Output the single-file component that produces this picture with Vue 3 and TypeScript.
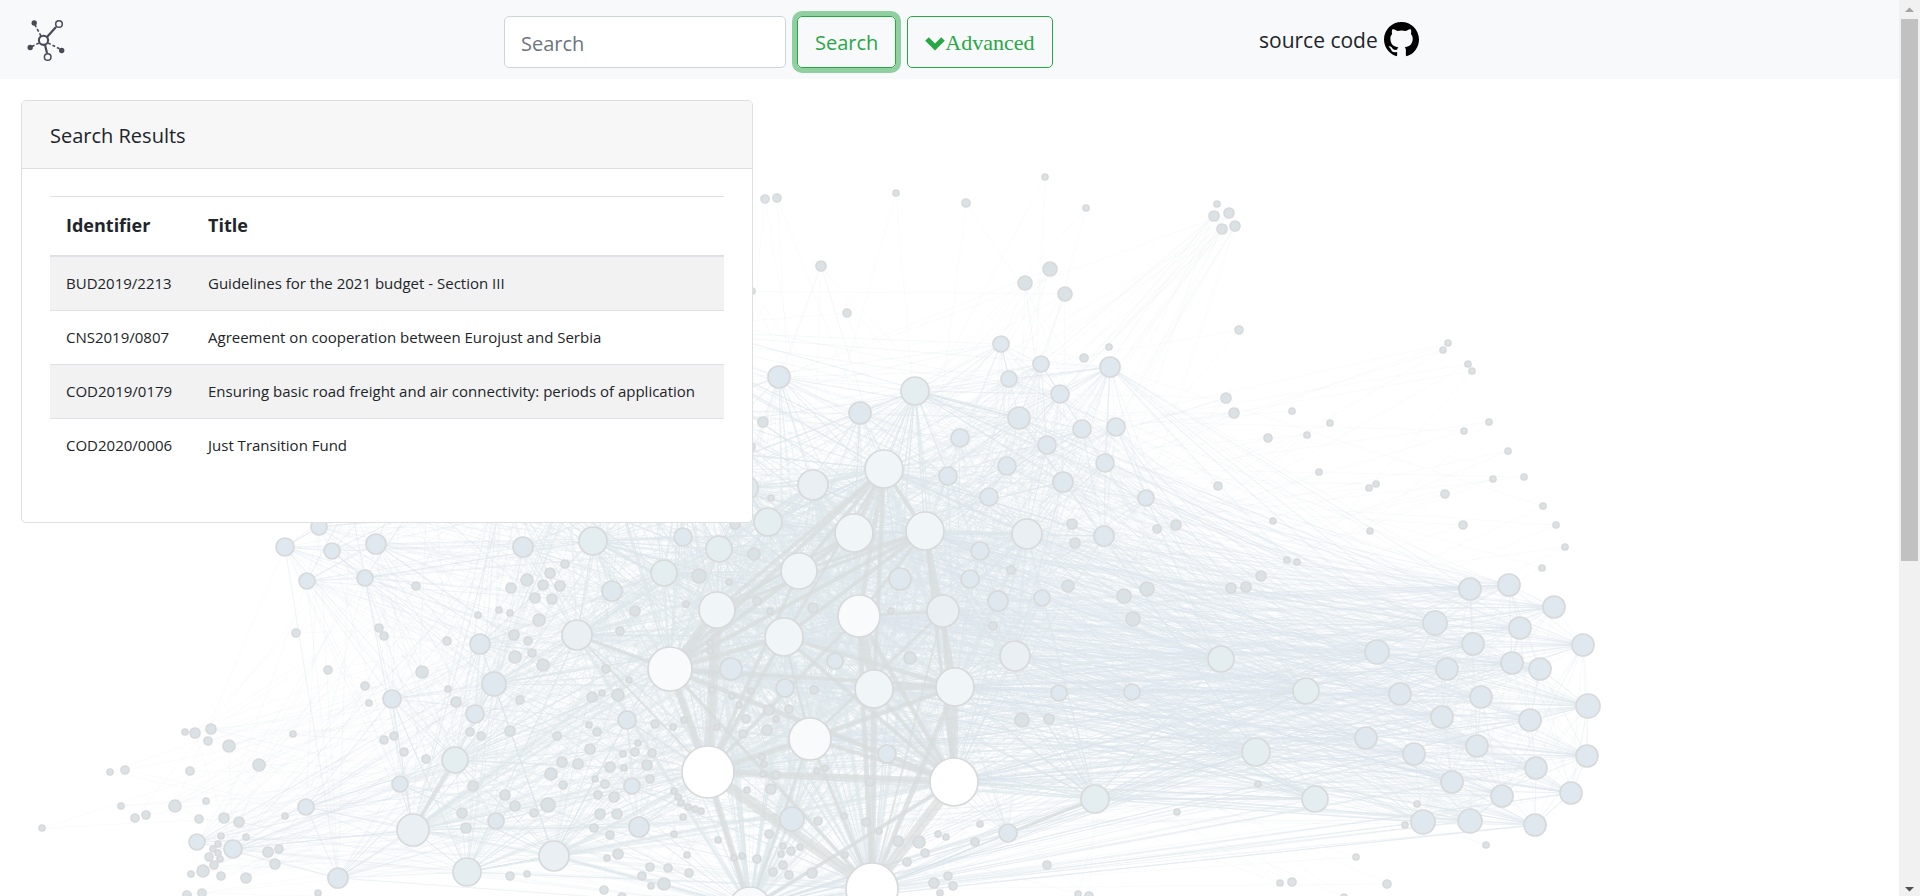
<script setup lang="ts">
import { ref } from 'vue'

type Node = [x: number, y: number, r: number]
interface Edge { x1: number; y1: number; x2: number; y2: number; w: number; o: number }

const query = ref('')

const results = [
  { id: 'BUD2019/2213', title: 'Guidelines for the 2021 budget - Section III' },
  { id: 'CNS2019/0807', title: 'Agreement on cooperation between Eurojust and Serbia' },
  { id: 'COD2019/0179', title: 'Ensuring basic road freight and air connectivity: periods of application' },
  { id: 'COD2020/0006', title: 'Just Transition Fund' },
]

// Dossiers in the upper part of the graph
const north: Node[] = [
  [765,199,4],[777,198,4],[896,193,3],[966,203,4],[1045,177,3],[1086,208,3],[1217,204,3],[1214,216,5],[1229,213,5],
  [1235,226,5],[1222,229,5],[821,266,5],[1050,269,7],[1025,283,7],[1065,294,7],[847,313,4],[1001,344,8],[1239,330,4],
  [1109,347,3],[1084,358,4],[1041,364,8],[1110,367,10],[1009,379,8],[1060,394,9],[779,377,11],[915,391,14],[860,413,11],
  [763,422,5],[1019,418,11],[960,438,9],[1082,429,9],[1116,427,9],[1047,445,9],[1226,398,5],[1234,413,5],[1292,411,3],
  [1268,438,4],[884,469,19],[813,485,15],[948,476,9],[1007,466,9],[1105,463,9],[1063,482,10],[989,497,9],[1146,498,8],
  [1218,486,4],[1273,521,3],[1072,524,5],[1157,529,4],[1176,525,5],[771,498,3],[752,291,3],[746,488,12],[750,447,5],[768,522,14],
  [1448,343,3],[1443,350,3],[1468,364,3],[1472,371,3],[1330,423,3],[1307,435,3],[1319,472,3],[1376,484,3],[1369,488,3],
  [1464,431,3],[1489,422,3],[1508,451,3],[1493,479,3],[1524,477,3],[1445,494,4],[1543,506,3],[1556,525,3],[1463,525,4],
  [1370,531,3],[1565,547,3],[1542,568,3],[1287,560,3],[1297,562,3],[1261,576,5],[1246,587,5],[1231,588,5],
  [560,290,12],[640,330,12],[430,420,10],[500,470,12],[600,440,12],[690,410,12],[400,480,9],[680,480,13],[560,500,10],[350,500,8],
]

// Densely linked group on the right
const east: Node[] = [
  [1470,589,11],[1509,585,11],[1554,607,11],[1583,645,11],[1520,628,11],[1435,623,12],[1473,644,11],[1377,652,12],[1512,663,11],
  [1540,669,11],[1447,669,11],[1400,694,11],[1481,697,11],[1588,706,12],[1442,717,11],[1530,720,11],[1366,738,11],[1414,754,11],
  [1477,746,11],[1587,756,11],[1536,768,11],[1452,782,11],[1502,796,11],[1571,793,11],[1535,825,11],[1470,821,12],[1423,822,12],
]

const centre: Node[] = [
  [1417,804,3],[1405,825,3],[1486,845,3],[1356,857,3],[1280,883,3],[1292,882,4],[1387,884,4],[1258,784,3],[1221,659,13],
  [1306,691,13],[1256,752,14],[1315,799,13],[1344,897,3],
  [854,533,19],[925,531,19],[1027,534,15],[980,551,9],[900,579,11],[970,579,9],[998,601,10],[1011,570,4],[1075,543,5],
  [1104,536,10],[1068,586,6],[1042,598,8],[1124,596,7],[1147,589,7],[1133,619,7],[859,616,21],[943,611,16],[891,611,3],
  [993,626,4],[1015,656,15],[835,661,8],[910,658,6],[874,689,19],[955,687,19],[1059,693,8],[1132,692,8],[1022,720,7],
  [1049,719,5],[887,754,9],[954,782,24],[1095,799,14],[1008,833,9],[1177,812,3],[1047,865,4],[980,824,3],[975,842,4],
  [938,834,3],[946,837,3],[919,842,6],[898,841,5],[925,853,4],[907,862,4],[866,822,4],[879,831,3],[870,782,4],[825,768,3],
  [844,816,3],[845,855,3],[934,883,5],[948,876,4],[953,886,4],[940,893,3],[872,889,26],[1078,894,3],[1089,896,4],
  [523,547,10],[593,541,14],[683,537,9],[719,549,13],[664,573,13],[699,576,7],[754,554,6],[735,524,5],[799,571,18],[729,582,3],
  [565,564,4],[550,573,5],[527,580,6],[511,588,5],[543,585,5],[560,586,5],[535,598,5],[552,599,5],[612,591,10],[635,611,5],
  [686,604,3],[499,610,3],[510,613,3],[478,615,3],[539,620,6],[620,631,4],[577,635,15],[717,610,18],[757,601,4],[770,611,3],
  [813,608,5],[784,637,19],[514,635,5],[528,641,4],[532,653,4],[515,657,6],[543,665,6],[480,644,10],[494,684,12],[606,669,4],
  [629,680,3],[670,669,22],[710,643,3],[710,651,3],[731,669,11],[785,688,9],[712,690,3],[732,696,3],[739,705,3],[751,691,3],
  [814,690,4],[769,710,5],[789,709,4],[776,719,3],[746,719,4],[743,734,4],[767,730,5],[592,697,5],[602,693,3],[618,695,6],
  [520,700,4],[475,714,9],[470,732,4],[481,736,4],[510,731,5],[627,720,9],[655,724,4],[673,727,3],[684,720,3],[717,727,3],
  [589,725,3],[597,732,4],[557,736,4],[590,749,5],[638,743,3],[635,752,4],[623,754,3],[652,753,4],[562,762,5],[578,764,5],
  [551,774,6],[563,785,4],[610,767,5],[624,768,3],[647,765,5],[650,779,4],[595,779,3],[605,784,4],[632,786,8],[598,795,4],
  [614,797,5],[674,791,3],[678,797,3],[681,803,3],[688,807,3],[695,809,3],[701,811,3],[683,817,3],[674,834,3],[708,772,26],
  [810,739,21],[776,775,4],[763,774,3],[764,764,3],[762,757,3],[771,789,5],[747,790,3],[817,771,3],[473,786,5],[505,795,5],
  [515,806,5],[534,813,4],[548,805,7],[496,821,8],[600,814,5],[617,814,5],[594,828,4],[610,835,4],[639,827,10],[554,856,15],
  [607,858,3],[618,854,5],[687,855,3],[718,840,3],[734,858,3],[742,856,3],[757,859,4],[650,867,4],[668,868,4],[642,876,4],
  [689,873,4],[664,884,6],[651,886,3],[604,890,4],[510,876,4],[527,874,3],[792,819,12],[769,834,4],[818,821,4],[800,847,3],
  [791,851,4],[783,846,3],[781,854,3],[783,865,4],[773,872,4],[789,875,4],[812,873,5],[750,908,21],[622,897,4],
]

const west: Node[] = [
  [319,527,8],[285,547,9],[332,551,8],[376,544,10],[307,581,8],[365,578,8],[416,586,4],[296,633,4],[379,628,4],[384,636,4],
  [447,641,4],[328,670,4],[422,672,6],[365,686,4],[369,703,3],[392,699,9],[448,689,3],[456,702,5],[185,732,3],[195,733,5],
  [211,729,5],[208,741,4],[229,746,6],[293,734,3],[384,740,4],[394,736,4],[404,752,4],[426,759,4],[259,765,6],[110,772,3],
  [125,770,4],[190,771,4],[455,760,13],[400,784,8],[175,806,6],[206,801,3],[121,806,3],[135,818,4],[146,815,4],[42,828,3],
  [199,819,4],[224,818,5],[239,822,5],[306,807,8],[285,816,3],[413,830,16],[462,813,5],[466,828,5],[197,842,8],[221,836,3],
  [246,837,3],[218,844,3],[213,849,3],[218,853,3],[209,857,4],[220,859,3],[214,865,4],[233,849,9],[268,852,5],[279,849,4],
  [275,864,5],[203,871,6],[191,874,3],[221,876,4],[246,878,5],[338,878,10],[467,872,14],[187,895,4],[202,893,4],[318,893,3],
]

const nodes: Node[] = [...north, ...east, ...centre, ...west]

let seed = 20200
function random(): number {
  seed = (seed * 1664525 + 1013904223) % 4294967296
  return seed / 4294967296
}

function pickTarget(from: Node, pool: Node[], reach: number): Node {
  let best = pool[0]
  let bestScore = -1
  for (let i = 0; i < 5; i++) {
    const node = pool[Math.floor(random() * pool.length)]
    if (node === from) continue
    const distance = Math.hypot(node[0] - from[0], node[1] - from[1])
    const score = node[2] / (reach + distance) * (0.5 + random())
    if (score > bestScore) {
      best = node
      bestScore = score
    }
  }
  return best
}

function degree(r: number): number {
  if (r >= 18) return 110
  if (r >= 12) return 60
  if (r >= 8) return 26
  if (r >= 5) return 7
  return 2
}

const major = nodes.filter(n => n[2] >= 8)
const core = nodes.filter(n => n[2] >= 8 && n[0] > 540 && n[0] < 1160)
const links: Edge[] = []

function connect(a: Node, b: Node, w = 1) {
  const o = a[2] < 8 ? 0.16 : a[2] < 12 ? 0.24 : 0.32
  links.push({ x1: a[0], y1: a[1], x2: b[0], y2: b[1], w, o })
}

for (const node of [...north, ...centre, ...west]) {
  const pool = node[2] < 5 || node[0] > 1180 ? core : major.filter(n => n[0] < 1340)
  for (let i = 0; i < degree(node[2]); i++) {
    const target = pickTarget(node, pool, 120)
    connect(node, target, node[2] > 14 && target[2] > 14 && random() < 0.2 ? 4 : 1)
  }
}
for (const node of east) {
  for (let i = 0; i < 36; i++) connect(node, pickTarget(node, core, 500))
  for (let i = 0; i < 9; i++) connect(node, pickTarget(node, east, 200))
}

const strong: [number, number, number, number, number][] = [
  [708,772,717,610,10],[708,772,670,669,7],[708,772,872,889,11],[708,772,750,908,6],[708,772,810,739,6],[708,772,784,637,4],
  [708,772,799,571,4],[708,772,859,616,3],[708,772,954,782,7],[708,772,577,635,2],[670,669,577,635,3],[670,669,717,610,8],
  [670,669,784,637,5],[670,669,854,533,4],[670,669,925,531,4],[670,669,884,469,4],[670,669,954,782,5],[670,669,872,889,3],
  [670,669,955,687,4],[717,610,884,469,4],[717,610,925,531,3],[717,610,854,533,3],[872,889,954,782,11],[872,889,810,739,4],
  [872,889,859,616,5],[872,889,874,689,6],[872,889,955,687,5],[872,889,943,611,2],[954,782,955,687,7],[954,782,925,531,3],
  [954,782,874,689,4],[954,782,859,616,5],[954,782,784,637,4],[954,782,943,611,4],[750,908,954,782,3],[750,908,810,739,2],
  [884,469,854,533,6],[884,469,925,531,4],[884,469,859,616,5],[884,469,874,689,4],[884,469,784,637,3],[884,469,799,571,4],
  [925,531,955,687,6],[925,531,784,637,4],[925,531,859,616,3],[859,616,943,611,3],[859,616,874,689,8],[799,571,925,531,3],
  [784,637,955,687,4],[784,637,810,739,2],[810,739,955,687,4],[810,739,943,611,3],[874,689,955,687,4],[810,739,954,782,4],
  [413,830,455,760,4],[1095,799,1008,833,3],
]

function fill(r: number): string {
  if (r >= 24) return '#ffffff'
  if (r >= 21) return '#f8fafc'
  if (r >= 18) return '#f0f5f8'
  if (r >= 15) return '#e9eff3'
  if (r >= 13) return '#e4edf0'
  if (r >= 8) return '#dfe8ee'
  return '#dbe2e6'
}
</script>

<template>
  <div class="window">
    <div class="page">
      <nav class="navbar">
        <a class="brand" href="#" aria-label="Home">
          <svg width="44" height="46" viewBox="24 17 44 46" fill="none" stroke="#4a4a57">
            <path d="M47 37 56 27M45 45l2 8" stroke-width="2.2" />
            <path d="M41 36l-6-11M39 43l-8 4M48 43l12 6" stroke-width="1.6" stroke-dasharray="3 2" />
            <circle cx="43.5" cy="40.3" r="4.6" stroke-width="2.1" />
            <circle cx="59" cy="24" r="3.3" stroke-width="1.5" />
            <circle cx="47.7" cy="57" r="3.3" stroke-width="1.5" />
            <g fill="#4a4a57" stroke="none">
              <circle cx="34.2" cy="23" r="2.7" /><circle cx="30.2" cy="47.5" r="2.7" /><circle cx="61.7" cy="50.5" r="2.7" />
            </g>
          </svg>
        </a>
        <form class="search" role="search" @submit.prevent>
          <input v-model="query" class="field" type="search" placeholder="Search" aria-label="Search">
          <button class="button active" type="submit">Search</button>
          <button class="button advanced" type="button">
            <svg width="20" height="15" viewBox="0 0 20 15"><path d="M2 3 10 11 18 3" fill="none" stroke="#28a745" stroke-width="5" /></svg>Advanced
          </button>
        </form>
        <a class="source" href="#">source code
          <svg width="35" height="35" viewBox="0 0 16 16" aria-hidden="true"><path fill="#000" fill-rule="evenodd" d="M8 0C3.58 0 0 3.58 0 8c0 3.54 2.29 6.53 5.47 7.59.4.07.55-.17.55-.38 0-.19-.01-.82-.01-1.49-2.01.37-2.53-.49-2.69-.94-.09-.23-.48-.94-.82-1.13-.28-.15-.68-.52-.01-.53.63-.01 1.08.58 1.23.82.72 1.21 1.87.87 2.33.66.07-.52.28-.87.51-1.07-1.78-.2-3.64-.89-3.64-3.95 0-.87.31-1.59.82-2.15-.08-.2-.36-1.02.08-2.12 0 0 .67-.21 2.2.82.64-.18 1.32-.27 2-.27s1.36.09 2 .27c1.53-1.04 2.2-.82 2.2-.82.44 1.1.16 1.92.08 2.12.51.56.82 1.27.82 2.15 0 3.07-1.87 3.75-3.65 3.95.29.25.54.73.54 1.48 0 1.07-.01 1.93-.01 2.2 0 .21.15.46.55.38A8.01 8.01 0 0 0 16 8c0-4.42-3.58-8-8-8z" /></svg>
        </a>
      </nav>

      <svg class="network" viewBox="0 0 1899 896" preserveAspectRatio="xMinYMin slice" aria-hidden="true">
        <g stroke="#dfe8ed">
          <line v-for="(e, i) in links" :key="i" :x1="e.x1" :y1="e.y1" :x2="e.x2" :y2="e.y2" :stroke-width="e.w" :stroke-opacity="e.o" />
        </g>
        <g stroke="#d9dbdc" stroke-opacity="0.65">
          <line v-for="(e, i) in strong" :key="i" :x1="e[0]" :y1="e[1]" :x2="e[2]" :y2="e[3]" :stroke-width="e[4]" />
        </g>
        <g stroke="#d8d9da" stroke-width="1.7">
          <circle v-for="(n, i) in nodes" :key="i" :cx="n[0]" :cy="n[1]" :r="n[2]" :fill="fill(n[2])" />
        </g>
      </svg>

      <main class="content">
        <section class="card">
          <h1 class="card-title">Search Results</h1>
          <div class="card-body">
            <table class="results">
              <thead><tr><th scope="col">Identifier</th><th scope="col">Title</th></tr></thead>
              <tbody>
                <tr v-for="item in results" :key="item.id"><td>{{ item.id }}</td><td>{{ item.title }}</td></tr>
              </tbody>
            </table>
          </div>
        </section>
      </main>
    </div>
    <div class="scrollbar" aria-hidden="true">
      <svg width="9" height="5" viewBox="0 0 9 5"><path d="M0 5 4.500 0.500 9 5z" fill="#a3a3a3" /></svg>
      <div class="track"><div class="thumb"></div></div>
      <svg width="9" height="5" viewBox="0 0 9 5"><path d="M0 0 4.500 4.500 9 0z" fill="#505050" /></svg>
    </div>
  </div>
</template>

<style>
body { margin: 0; }
</style>

<style scoped>
* { box-sizing: border-box; }
.window {
  display: flex;
  height: 100vh;
  overflow: hidden;
  background: #fff;
  color: #212529;
  font-family: "Open Sans", "Noto Sans", sans-serif;
  font-size: 20px;
  line-height: 30px;
}
.page {
  position: relative;
  flex: 1;
  min-width: 0;
  overflow: hidden;
}
.navbar {
  position: relative;
  z-index: 1;
  display: grid;
  grid-template-columns: 480fr 755fr 640fr;
  align-items: center;
  height: 79px;
  padding: 0 0 0 24px;
  background: #f8f9fb;
}
.brand, .brand svg { display: block; }
.search {
  display: flex;
  gap: 11px;
  padding-top: 5px;
}
.field {
  width: 282px;
  height: 52px;
  padding: 2px 16px 0;
  border: 1px solid #ced4da;
  border-radius: 5px;
  background: #fff;
  color: #495057;
  font: inherit;
  appearance: none;
}
.field::placeholder { color: #6c757d; opacity: 1; }
.button {
  display: flex;
  align-items: center;
  height: 52px;
  padding: 2px 17px 0;
  border: 1px solid #28a745;
  border-radius: 5px;
  background: transparent;
  color: #28a745;
  font: inherit;
}
.active { box-shadow: 0 0 0 5px rgba(40, 167, 69, 0.5); }
.advanced {
  font-family: "Liberation Serif", serif;
  font-size: 22px;
}
.source {
  display: flex;
  align-items: center;
  gap: 6px;
  color: #212529;
  font-size: 21px;
  text-decoration: none;
}
.network {
  position: absolute;
  top: 0;
  left: 0;
  width: 100%;
  height: 100%;
}
.content {
  position: relative;
  display: flex;
  padding: 21px;
}
.card {
  min-width: 732px;
  border: 1px solid #dfdfdf;
  border-radius: 5px;
  background: #fff;
}
.card-title {
  margin: 0;
  padding: 20px 28px 17px;
  border-bottom: 1px solid #dfdfdf;
  border-radius: 4px 4px 0 0;
  background: #f7f7f7;
  font-size: 20px;
  font-weight: 400;
}
.card-body { padding: 27px 28px 50px; }
.results {
  width: 100%;
  border-collapse: collapse;
  font-size: 15px;
  line-height: 21px;
}
.results th, .results td {
  padding: 16px;
  border-top: 1px solid #dee2e6;
  text-align: left;
}
.results th {
  height: 59px;
  border-bottom: 2px solid #dee2e6;
  font-size: 18px;
}
.results th:first-child { width: 142px; }
.results tbody tr:nth-child(odd) { background: #f2f2f2; }
.scrollbar {
  display: flex;
  flex-direction: column;
  align-items: center;
  width: 21px;
  padding: 7px 0 4px;
  background: #f1f1f1;
}
.track {
  flex: 1;
  width: 17px;
  padding: 7px 0;
}
.thumb {
  height: 63%;
  background: #c1c1c1;
}
</style>
